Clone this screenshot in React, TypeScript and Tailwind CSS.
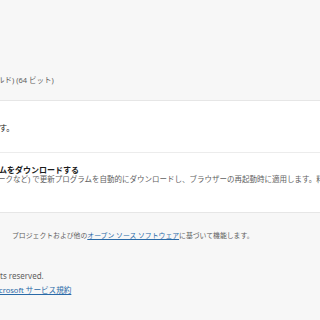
export default function App() {
  const font = { fontFamily: '"Noto Sans", "Noto Sans CJK JP", sans-serif' };
  return (
    <div
      className="w-[320px] h-[320px] overflow-hidden bg-[#f7f7f7] flex flex-col"
      style={font}
    >
      <div className="pt-[75px] h-[86px] whitespace-nowrap text-[7.5px] leading-[11px] text-[#5e5e5e] -ml-[3px]">
        ルド) (64 ビット)
      </div>
      <div className="mt-[14px] bg-white border-y border-[#e6e6e6] flex flex-col">
        <div className="h-[51px] pt-[21px] whitespace-nowrap text-[8.2px] leading-[12px] text-[#1b1b1b] -ml-[1px]">
          す。
        </div>
        <div className="h-[60px] border-t border-[#ececec] pt-[11px] flex flex-col whitespace-nowrap">
          <div className="text-[8px] leading-[11px] font-semibold text-[#1b1b1b] -ml-[1px]">
            ムをダウンロードする
          </div>
          <div className="text-[7.5px] leading-[9px] text-[#616161] -ml-[2px]">
            ークなど) で更新プログラムを自動的にダウンロードし、ブラウザーの再起動時に適用します。料金が発生する場合があります。
          </div>
        </div>
      </div>
      <div className="mt-[18px] pl-[12px] whitespace-nowrap text-[6.85px] leading-[10px] text-[#5e5e5e]">
        プロジェクトおよび他の
        <span className="text-[#2a6aa8] underline underline-offset-[1px]">オープン ソース ソフトウェア</span>
        に基づいて機能します。
      </div>
      <div className="mt-[30px] whitespace-nowrap text-[8px] leading-[10px] text-[#5e5e5e]">
        ts reserved.
      </div>
      <div className="mt-[4px] whitespace-nowrap text-[7.6px] leading-[10px] -ml-[1px]">
        <span className="text-[#2a6aa8] underline underline-offset-[1px]">crosoft サービス規約</span>
      </div>
    </div>
  );
}
